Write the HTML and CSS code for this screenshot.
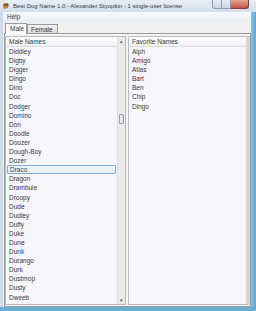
FILE: index.html
```html
<!doctype html>
<html lang="en">
<head>
    <meta charset="UTF-8">
    <title>Best Dog Name 1.0</title>
    <link rel="stylesheet" href="styles.css">
</head>
<body>
    <div class="window">
        <div class="titlebar">
            <svg class="app-icon" width="8" height="8" viewBox="0 0 8 8">
                <path d="M1 2 L3 1 L6 1 L7 3 L6 6 L2 7 L1 5 Z" fill="#b58a55"/>
                <circle cx="3" cy="3" r="0.8" fill="#402a14"/>
                <circle cx="5.2" cy="3" r="0.8" fill="#402a14"/>
            </svg>
            <span class="title">Best Dog Name 1.0 - Alexander Styopkin - 1 single-user license</span>
            <div class="controls">
                <span class="btn min"></span>
                <span class="btn max"></span>
                <span class="btn close"></span>
            </div>
        </div>
        <div class="client">
            <div class="menubar"><span>Help</span></div>
            <div class="tabs">
                <span class="tab active">Male</span>
                <span class="tab">Female</span>
            </div>
            <div class="panel">
                <div class="list male">
                    <div class="list-main">
                        <div class="list-head">Male Names</div>
                        <ul class="rows">
                            <li>Diddley</li>
                            <li>Digby</li>
                            <li>Digger</li>
                            <li>Dingo</li>
                            <li>Dino</li>
                            <li>Doc</li>
                            <li>Dodger</li>
                            <li>Domino</li>
                            <li>Don</li>
                            <li>Doodle</li>
                            <li>Doozer</li>
                            <li>Dough-Boy</li>
                            <li>Dozer</li>
                            <li class="selected">Draco</li>
                            <li>Dragon</li>
                            <li>Drambuie</li>
                            <li>Droopy</li>
                            <li>Dude</li>
                            <li>Dudley</li>
                            <li>Duffy</li>
                            <li>Duke</li>
                            <li>Dune</li>
                            <li>Dunk</li>
                            <li>Durango</li>
                            <li>Durk</li>
                            <li>Dustmop</li>
                            <li>Dusty</li>
                            <li>Dweeb</li>
                            <li>Dyno</li>
                        </ul>
                    </div>
                    <div class="scrollbar">
                        <span class="arrow">&#9652;</span>
                        <div class="track">
                            <span class="thumb"></span>
                        </div>
                        <span class="arrow">&#9662;</span>
                    </div>
                </div>
                <div class="list fav">
                    <div class="list-main">
                        <div class="list-head">Favorite Names</div>
                        <ul class="rows">
                            <li>Alph</li>
                            <li>Amigo</li>
                            <li>Atlas</li>
                            <li>Bart</li>
                            <li>Ben</li>
                            <li>Chip</li>
                            <li>Dingo</li>
                        </ul>
                    </div>
                </div>
            </div>
        </div>
    </div>
</body>
</html>
```
FILE: styles.css
```css
* {
    margin: 0;
    padding: 0;
    box-sizing: border-box;
}

body {
    width: 256px;
    height: 311px;
    overflow: hidden;
    font-family: 'Liberation Sans', Arial, sans-serif;
    color: #3a3a3a;
    background: #6fb3d8;
}

.window {
    width: 256px;
    height: 311px;
    display: flex;
    flex-direction: column;
    background: linear-gradient(to right, #cfdcea 0, #d7e3ef 60%, #8fc3df 98%, #5aa6cf 100%);
    border-bottom: 4px solid #6aaed5;
}

.titlebar {
    height: 12px;
    flex: none;
    display: flex;
    align-items: center;
    background: linear-gradient(#e7eef7, #d3dfec);
}

.app-icon {
    margin-left: 2px;
    margin-right: 3px;
    flex: none;
}

.title {
    font-size: 6px;
    color: #3a3a3a;
    white-space: nowrap;
    flex: 1;
}

.controls {
    display: flex;
    align-self: flex-start;
    margin-right: 7px;
}

.btn {
    height: 9px;
    border: 1px solid #8a9cb2;
    border-top: none;
    background: linear-gradient(#e9eef5, #c9d5e3);
}

.min {
    width: 10px;
    border-radius: 0 0 0 3px;
}

.max {
    width: 9px;
    border-left: none;
}

.close {
    width: 18px;
    border-left: none;
    border-color: #8d3b32;
    border-radius: 0 0 3px 0;
    background: linear-gradient(#e6a596, #c7503f);
}

.client {
    flex: 1;
    min-height: 0;
    display: flex;
    flex-direction: column;
    margin: 0 5px 0 3px;
    background: #f0f0f0;
}

.menubar {
    height: 10px;
    flex: none;
    font-size: 6.5px;
    line-height: 10px;
    padding-left: 4px;
    background: linear-gradient(#f7f9fc, #eaeef3);
}

.tabs {
    height: 11px;
    flex: none;
    display: flex;
    align-items: flex-end;
    padding-left: 2px;
}

.tab {
    font-size: 6.5px;
    height: 9px;
    line-height: 9px;
    padding: 0 4px 0 3px;
    border: 1px solid #9a9a9a;
    border-bottom: none;
    background: linear-gradient(#f2f2f2, #dcdcdc);
}

.tab.active {
    height: 11px;
    line-height: 10px;
    width: 22px;
    padding-left: 4px;
    background: #fbfbfb;
    margin-bottom: -1px;
    position: relative;
    z-index: 1;
}

.panel {
    flex: 1;
    min-height: 0;
    display: flex;
    gap: 2px;
    margin-left: 1px;
    border: 1px solid #9a9a9a;
    padding: 2px 0 1px 0;
    background: #f4f4f4;
}

.list {
    display: flex;
    border: 1px solid #b7bcc4;
    background: #f6f6fd;
    overflow: hidden;
}

.male {
    width: 121px;
}

.fav {
    flex: 1;
    border-right: 4px solid #d6d6d8;
}

.list-main {
    flex: 1;
    min-width: 0;
}

.list-head {
    height: 10px;
    line-height: 9px;
    font-size: 6.5px;
    padding-left: 3px;
    color: #3a3a3a;
    background: linear-gradient(#ffffff, #f0f1f4);
    border-bottom: 1px solid #d8dbe0;
}

.rows {
    list-style: none;
}

.rows li {
    height: 9.1px;
    line-height: 9px;
    font-size: 6.5px;
    padding-left: 3px;
    white-space: nowrap;
}

.rows li.selected {
    margin: 0 1px 0 1px;
    padding-left: 2px;
    border: 1px solid #86a9d2;
    border-radius: 1px;
    background: #eef4fc;
    line-height: 7px;
}

.scrollbar {
    width: 8px;
    display: flex;
    flex-direction: column;
    background: #eaeaea;
    border-left: 1px solid #e0e0e0;
}

.arrow {
    height: 8px;
    font-size: 5px;
    line-height: 8px;
    text-align: center;
    color: #555;
}

.track {
    flex: 1;
    padding-top: 69px;
}

.thumb {
    display: block;
    height: 10px;
    margin: 0 1px;
    border: 1px solid #9aa0a8;
    border-radius: 1px;
    background: linear-gradient(to right, #f4f4f4, #dcdcdc);
}
```
